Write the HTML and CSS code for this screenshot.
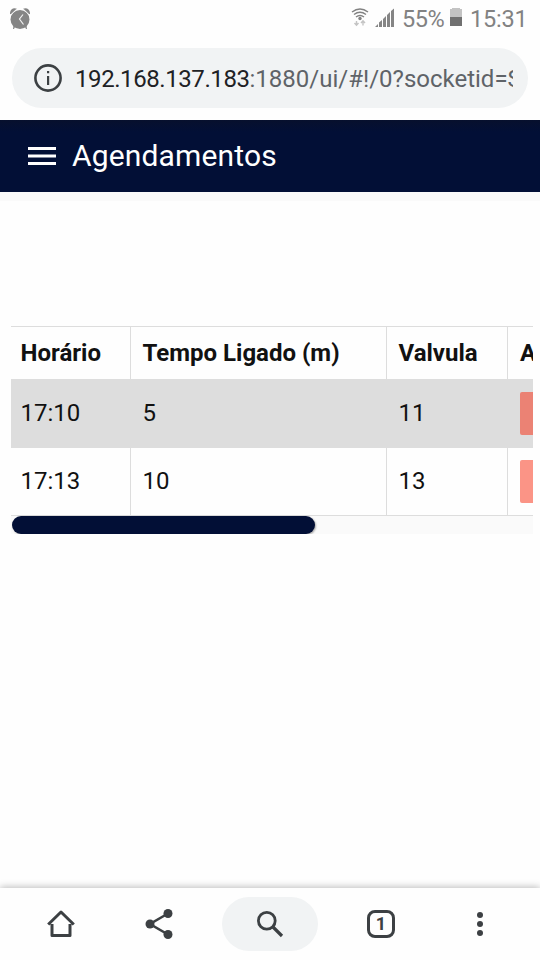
FILE: index.html
```html
<!DOCTYPE html>
<html lang="pt-BR">
<head>
<meta charset="utf-8">
<title>Agendamentos</title>
<link rel="stylesheet" href="styles.css">
</head>
<body>
<header class="status">
  <svg class="alarm" width="20" height="22" viewBox="0 0 20 22"><g fill="#858585"><circle cx="10" cy="11.500" r="9.500"/><path d="M0 6C-.3 1 3.500-.8 7 .7L1.200 6.300zM20 6C20.300 1 16.500-.8 13 .7L18.800 6.300z"/><path d="M3.500 18l1.500 1-1 2H3zM16.500 18l-1.500 1 1 2h1z"/></g><path d="M6.800 1L1 6.500M13.200 1L19 6.500" stroke="#fefefe" stroke-width=".8"/><path d="M13 6.500L9.500 11l4 5.500" fill="none" stroke="#f2f2f2" stroke-width="1.200"/></svg>
  <svg class="wifi" width="18" height="20" viewBox="0 0 18 20"><g fill="none" stroke="#828282" stroke-width="1.500"><path d="M1 4Q9-2 17 4M3 6.500Q9 2.200 15 6.500M5 9Q9 6 13 9"/></g><circle cx="9" cy="10.500" r="1.700" fill="#828282"/><path d="M5.500 13v4M3.500 15l2 2.300 2-2.300M12 17.500v-4M10 15l2-2.300 2 2.300" fill="none" stroke="#c4c4c4" stroke-width="1.400"/></svg>
  <svg class="signal" width="20" height="20" viewBox="0 0 20 20"><path d="M0 19l3-3v3zM4 14.500l3-2.500v7H4zM8 11l3-3v11H8zM12 7l3-3v15h-3zM16 3l3-2.500V19h-3z" fill="#858585"/></svg>
  <span class="percent">55%</span>
  <svg class="battery" width="12" height="18" viewBox="0 0 12 18"><path d="M0 1h2V0h8v1h2v8H0z" fill="#c3c3c3"/><path d="M0 9h12v9H0z" fill="#707070"/></svg>
  <span class="clock">15:31</span>
</header>
<div class="address">
  <svg width="28" height="28" viewBox="0 0 28 28"><circle cx="14" cy="14" r="12.600" fill="none" stroke="#3c4043" stroke-width="2.600"/><path d="M13 7h2.200v2.200H13zM13 12h2.200v9H13z" fill="#3c4043"/></svg>
  <div class="url"><span class="host">192.168.137.183</span>:1880/ui/#!/0?socketid=S</div>
</div>
<div class="toolbar">
  <svg width="28" height="18" viewBox="0 0 28 18"><path d="M0 0h28v3H0zM0 7.500h28v3H0zM0 15h28v3H0z" fill="#fff"/></svg>
  <h1>Agendamentos</h1>
</div>
<main>
  <div class="table-view">
    <table>
      <colgroup><col class="c1"><col class="c2"><col class="c3"><col class="c4"></colgroup>
      <thead><tr><th>Horário</th><th>Tempo Ligado (m)</th><th>Valvula</th><th>A</th></tr></thead>
      <tbody>
        <tr class="selected"><td>17:10</td><td>5</td><td>11</td><td><span class="action"></span></td></tr>
        <tr><td>17:13</td><td>10</td><td>13</td><td><span class="action"></span></td></tr>
      </tbody>
    </table>
    <div class="scroll"><div class="thumb"></div></div>
  </div>
</main>
<nav>
  <div><svg class="home" width="28" height="28" viewBox="0 0 28 28"><path d="M5 14v11.500h18V14M1.200 14.500L14 2l12.800 12.500" fill="none" stroke="#3c4043" stroke-width="3" stroke-linejoin="round"/></svg></div>
  <div><svg width="28" height="30" viewBox="0 0 28 30"><path d="M23 4.500L5 15l18 10.500" fill="none" stroke="#3c4043" stroke-width="2.600"/><g fill="#3c4043"><circle cx="23" cy="4.500" r="4.500"/><circle cx="5" cy="15" r="4.500"/><circle cx="23" cy="25.500" r="4.500"/></g></svg></div>
  <div><span class="pill"><svg width="28" height="28" viewBox="0 0 28 28"><circle cx="10.800" cy="10.800" r="8.400" fill="none" stroke="#3c4043" stroke-width="2.800"/><path d="M16.500 16.500l9.500 9.500" stroke="#3c4043" stroke-width="3.200"/></svg></span></div>
  <div><span class="tabs">1</span></div>
  <div><svg width="6" height="26" viewBox="0 0 6 26"><g fill="#3c4043"><circle cx="3" cy="4" r="3"/><circle cx="3" cy="13" r="3"/><circle cx="3" cy="22" r="3"/></g></svg></div>
</nav>
</body>
</html>
```
FILE: styles.css
```css
* { box-sizing: border-box; }
body {
  margin: 0;
  width: 540px;
  height: 960px;
  display: flex;
  flex-direction: column;
  overflow: hidden;
  background: #fefefe;
  color: #111;
  font-family: Roboto, sans-serif;
}
svg { display: block; flex: none; }
.status {
  height: 48px;
  display: flex;
  align-items: flex-start;
  padding: 8px 13px 0 10px;
  color: #828282;
  font-size: 23.500px;
  line-height: 22px;
}
.wifi { margin-left: auto; }
.signal { margin-left: 6px; }
.percent { width: 43px; margin-left: 7px; letter-spacing: -0.400px; }
.battery { margin-left: 5px; }
.clock { width: 57px; margin-left: 8px; white-space: nowrap; letter-spacing: -0.200px; }
.address {
  height: 60px;
  margin: 0 12px 12px;
  padding: 0 15px 0 22px;
  display: flex;
  align-items: center;
  gap: 13px;
  border-radius: 30px;
  background: #f1f3f4;
}
.url {
  flex: 1;
  padding-top: 2px;
  overflow: hidden;
  white-space: nowrap;
  color: #5f6368;
  font-size: 24px;
  line-height: 32px;
}
.host { color: #202124; letter-spacing: -0.420px; }
.toolbar {
  height: 72px;
  display: flex;
  align-items: center;
  gap: 16px;
  padding-left: 28px;
  background: linear-gradient(#07102d, #020f36 12px);
  color: #fff;
}
h1 { margin: 0; font-size: 30px; font-weight: 400; line-height: 40px; letter-spacing: 0.150px; }
main {
  flex: 1;
  padding: 125px 7px 0 11px;
  border-top: 9px solid #fafafa;
  background: #fefefe;
}
.table-view { overflow: hidden; }
table {
  width: 612px;
  table-layout: fixed;
  border-collapse: separate;
  border-spacing: 0;
  border-top: 1px solid #ddd;
  border-bottom: 1px solid #ddd;
}
.c1 { width: 120px; }
.c2 { width: 256px; }
.c3 { width: 121px; }
.c4 { width: 115px; }
th, td {
  padding: 0 0 0 11.500px;
  text-align: left;
  font-size: 24px;
  border-right: 1px solid #ddd;
  white-space: nowrap;
}
th:first-child, td:first-child { padding-left: 9.500px; }
th:last-child, td:last-child { padding-left: 12px; }
th { height: 52px; font-weight: 700; }
td { height: 67px; padding-bottom: 1px; }
.selected { background: #ddd; }
.selected td { height: 69px; padding-bottom: 2px; }
td:last-child, .selected td:last-child { padding-bottom: 0; }
.action {
  display: block;
  width: 80px;
  height: 43px;
  border-radius: 2px;
  background: #fb9486;
}
.selected .action { background: #eb8274; }
.scroll { height: 18px; background: #fafafa; padding-left: 1px; }
.thumb { width: 303px; height: 18px; border-radius: 9px; background: #020f36; box-shadow: 1px 1px 2px #0005; }
nav {
  height: 72px;
  display: grid;
  grid-template-columns: 99px 98px 124px 98px 100px;
  padding-left: 11px;
  background: #fefefe;
  box-shadow: 0 -1px 7px #0004;
}
nav > div { display: flex; align-items: center; justify-content: center; }
.pill {
  width: 96px;
  height: 54px;
  display: flex;
  align-items: center;
  justify-content: center;
  border-radius: 27px;
  background: #f1f3f4;
}
.tabs {
  width: 28px;
  height: 28px;
  border: 3px solid #3c4043;
  border-radius: 8px;
  color: #3c4043;
  font-size: 18px;
  font-weight: 700;
  line-height: 22px;
  text-align: center;
}
```
